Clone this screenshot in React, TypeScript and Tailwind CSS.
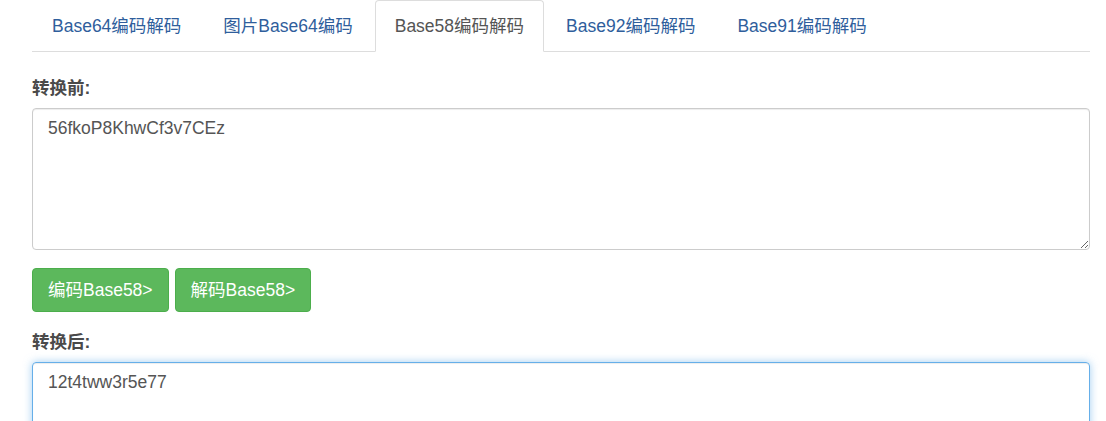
import { useState } from "react";

const tabs = ["Base64编码解码", "图片Base64编码", "Base58编码解码", "Base92编码解码", "Base91编码解码"];

export default function App() {
  const [active, setActive] = useState(2);
  const [input, setInput] = useState("56fkoP8KhwCf3v7CEz");
  const [output, setOutput] = useState("12t4tww3r5e77");

  return (
    <div className="min-h-screen bg-white pl-8 pr-4 font-['Liberation_Sans','Noto_Sans_CJK_SC',sans-serif] text-[17.5px] text-[#555]">
      <ul className="flex h-[52px] border-b border-[#ddd]">
        {tabs.map((t, i) => (
          <li key={t} className="-mb-px mr-[2px]">
            <button
              onClick={() => setActive(i)}
              className={
                i === active
                  ? "h-[52px] rounded-t border border-[#ddd] border-b-white bg-white px-[19px] leading-[22px] text-[#555]"
                  : "h-[52px] border border-transparent px-[19px] leading-[22px] text-[#2f5e9c]"
              }
            >
              {t}
            </button>
          </li>
        ))}
      </ul>

      <div className="pt-[25px]">
        <label className="block font-bold leading-[22px] text-[#4a4a4a]">转换前:</label>
        <textarea
          value={input}
          onChange={(e) => setInput(e.target.value)}
          className="mt-[9px] block h-[142px] w-full rounded border border-[#ccc] px-[15px] py-[8px] leading-[22px] text-[#555] shadow-[inset_0_1px_1px_rgba(0,0,0,0.075)] outline-none"
        />

        <div className="mt-[18px] flex gap-[6px]">
          <button className="h-[44px] rounded border border-[#4cae4c] bg-[#5cb85c] px-[15px] leading-[22px] text-white">
            编码Base58&gt;
          </button>
          <button className="h-[44px] rounded border border-[#4cae4c] bg-[#5cb85c] px-[15px] leading-[22px] text-white">
            解码Base58&gt;
          </button>
        </div>

        <label className="mt-[19px] block font-bold leading-[22px] text-[#4a4a4a]">转换后:</label>
        <textarea
          value={output}
          onChange={(e) => setOutput(e.target.value)}
          className="mt-[9px] block h-[142px] w-full rounded border border-[#66afe9] px-[15px] py-[8px] leading-[22px] text-[#555] shadow-[inset_0_1px_1px_rgba(0,0,0,0.075),0_0_8px_rgba(102,175,233,0.6)] outline-none"
        />
      </div>
    </div>
  );
}
